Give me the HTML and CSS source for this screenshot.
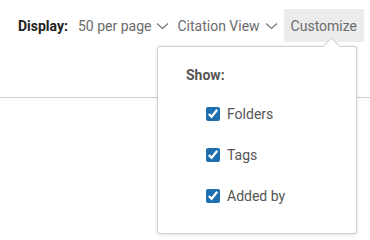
FILE: index.html
```html
<!DOCTYPE html>
<html>
<head>
<meta charset="utf-8">
<link rel="stylesheet" href="styles.css">
</head>
<body>
<div class="toolbar">
  <span class="label">Display:</span>
  <span class="drop">50 per page
    <svg class="chev" width="13" height="8" viewBox="0 0 13 8"><path d="M1 1.5 L6.5 6.5 L12 1.5" fill="none" stroke="#777" stroke-width="1.2"/></svg>
  </span>
  <span class="drop">Citation View
    <svg class="chev" width="13" height="8" viewBox="0 0 13 8"><path d="M1 1.5 L6.5 6.5 L12 1.5" fill="none" stroke="#777" stroke-width="1.2"/></svg>
  </span>
  <span class="drop active">Customize</span>
</div>
<div class="rule"></div>
<div class="popover">
  <div class="arrow"></div>
  <div class="title">Show:</div>
  <label class="opt"><input type="checkbox" checked><span>Folders</span></label>
  <label class="opt"><input type="checkbox" checked><span>Tags</span></label>
  <label class="opt"><input type="checkbox" checked><span>Added by</span></label>
</div>
</body>
</html>
```
FILE: styles.css
```css
html, body {
  margin: 0;
  padding: 0;
  background: #fff;
  font-family: Roboto, "Liberation Sans", sans-serif;
  font-size: 14px;
}
.toolbar {
  display: flex;
  align-items: center;
  padding: 9px 0 0 18px;
  height: 33px;
  white-space: nowrap;
}
.label {
  font-weight: bold;
  color: #222;
  margin-right: 10px;
  flex-shrink: 0;
}
.drop {
  display: flex;
  align-items: center;
  flex-shrink: 0;
  height: 33px;
  color: #6b6b6b;
  margin-right: 8px;
}
.chev {
  margin-left: 5px;
}
.drop.active {
  background: #ececec;
  padding: 0 7px;
  margin-left: -2px;
}
.rule {
  margin-top: 55px;
  height: 1px;
  background: #d0d0d0;
}
.popover {
  position: absolute;
  left: 157px;
  top: 46px;
  width: 198px;
  height: 186px;
  background: #fff;
  border: 1px solid #cfcfcf;
  border-radius: 3px;
  box-shadow: 0 1px 4px rgba(0,0,0,0.12);
  box-sizing: content-box;
}
.arrow {
  position: absolute;
  left: 167px;
  top: -7px;
  width: 12px;
  height: 12px;
  background: #fff;
  border-top: 1px solid #cfcfcf;
  border-left: 1px solid #cfcfcf;
  transform: rotate(45deg);
}
.title {
  font-weight: bold;
  color: #555;
  padding: 19px 0 0 28px;
  line-height: 18px;
}
.opt {
  display: flex;
  align-items: center;
  padding-left: 46px;
  height: 41px;
  color: #555;
  font-size: 14px;
}
.title + .opt {
  margin-top: 9px;
}
.opt input {
  width: 14px;
  height: 14px;
  margin: 0 7px 0 2px;
  accent-color: #1e6fb0;
}
```
